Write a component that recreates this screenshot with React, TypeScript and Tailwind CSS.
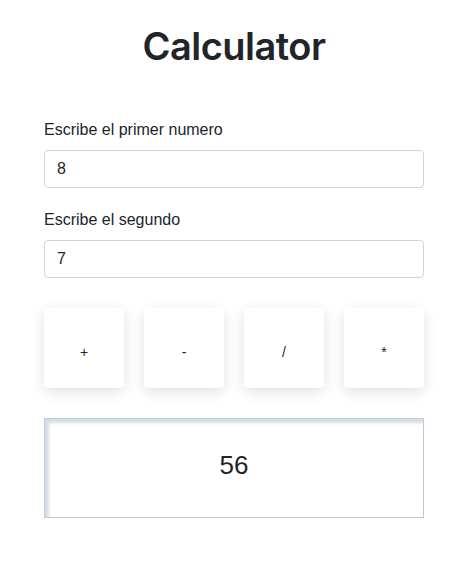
const ops = ["+", "-", "/", "*"];

export default function App() {
  return (
    <div className="min-h-[564px] bg-white text-[#212529] font-['Liberation_Sans',Arial,sans-serif]">
      <div className="ml-[44px] w-[380px] pt-[22px]">
        <h1 className="text-center font-['Inter',sans-serif] text-[38px] font-semibold leading-[48px] tracking-[-0.5px]">
          Calculator
        </h1>

        <div className="mt-[48px] flex flex-col">
          <label className="text-[16px] leading-6">Escribe el primer numero</label>
          <input
            readOnly
            value="8"
            className="mt-2 h-[38px] w-full rounded-[4px] border border-[#ced4da] px-3 text-[16px] outline-none"
          />

          <label className="mt-[20px] text-[16px] leading-6">Escribe el segundo</label>
          <input
            readOnly
            value="7"
            className="mt-2 h-[38px] w-full rounded-[4px] border border-[#ced4da] px-3 text-[16px] outline-none"
          />
        </div>

        {/* Operators */}
        <div className="mt-[30px] flex justify-between">
          {ops.map((op) => (
            <button
              key={op}
              className="h-20 w-20 rounded-[4px] bg-white pt-[8px] text-[14px] shadow-[0_4px_14px_rgba(0,0,0,0.12)]"
            >
              {op}
            </button>
          ))}
        </div>

        {/* Result */}
        <div className="mt-[30px] flex h-[100px] items-center justify-center border border-[#c8c8c8] pb-[6px] shadow-[inset_4px_4px_3px_rgba(180,200,225,0.6)] text-[26px]">
          56
        </div>
      </div>
    </div>
  );
}
